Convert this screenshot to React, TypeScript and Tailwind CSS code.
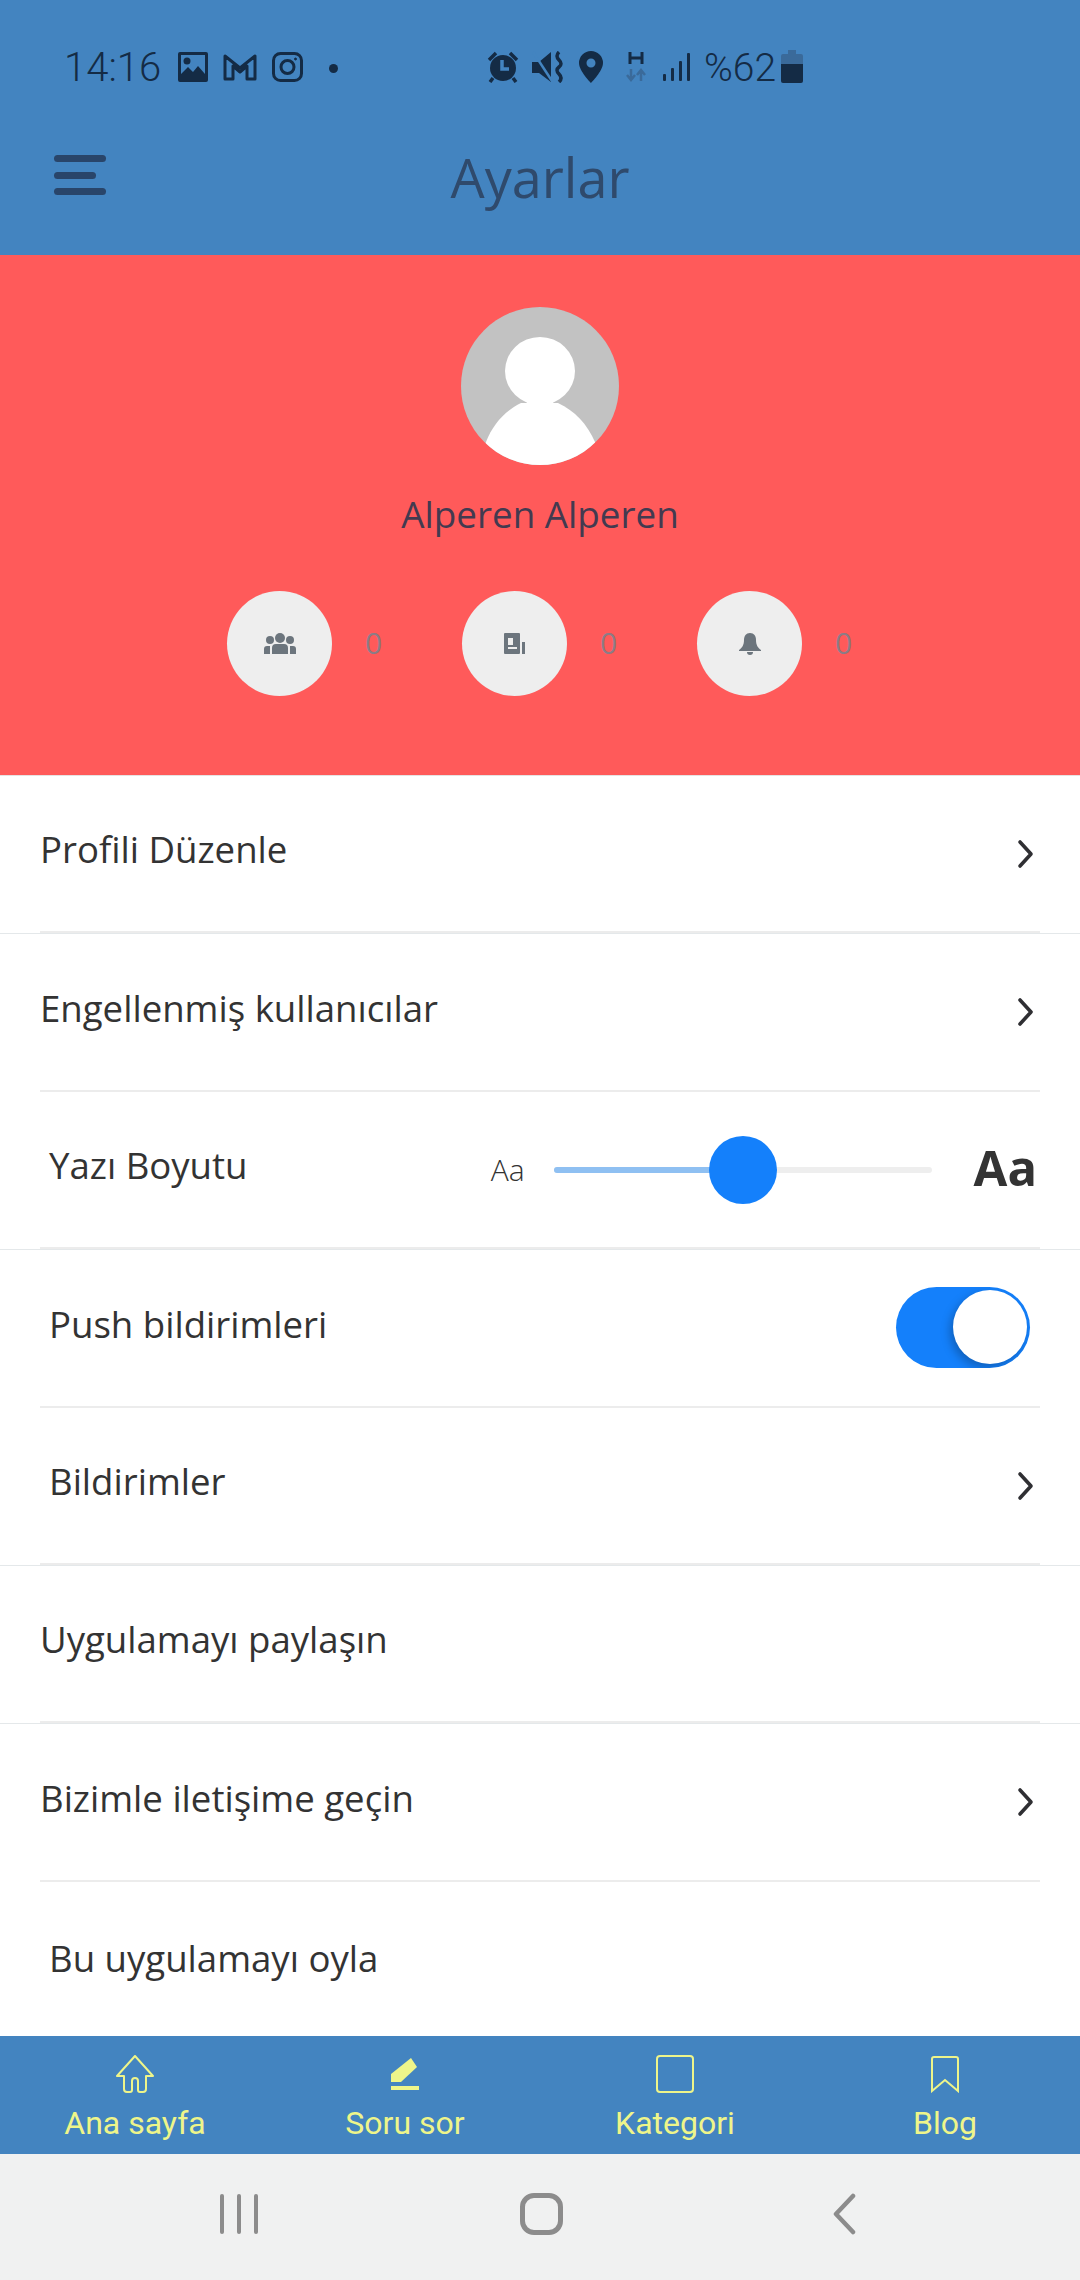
import type { ReactNode } from 'react'

const SANS = "font-['Open_Sans',sans-serif]"

function Chevron() {
  return (
    <svg width="18" height="30" viewBox="0 0 18 30" fill="none" stroke="#2f2f33" strokeWidth="3.600" strokeLinecap="round" strokeLinejoin="round">
      <path d="M4 3l11 12L4 27" />
    </svg>
  )
}

function StatusBar() {
  return (
    <div className="flex h-[97px] items-end pb-[9px] pl-[64px] text-[#142b45]">
      <span className="w-[114px] font-['Roboto',sans-serif] text-[40px] leading-[40px] font-light">14:16</span>
      <svg width="30" height="30" viewBox="0 0 30 30" className="mb-[6px]">
        <path fill="#142b45" fillRule="evenodd" d="M2 0h26a2 2 0 012 2v26a2 2 0 01-2 2H2a2 2 0 01-2-2V2a2 2 0 012-2zm1 3v19l7-7 5 5 5-6 7 8V3z" />
        <circle cx="9" cy="9" r="3.500" fill="#142b45" />
      </svg>
      <svg width="34" height="28" viewBox="0 0 34 28" fill="none" stroke="#142b45" strokeWidth="3" strokeLinejoin="round" className="mb-[7px] ml-[15px]">
        <path d="M2 26V3l15 12L32 3v23h-8V13l-7 6-7-6v13z" />
      </svg>
      <svg width="31" height="30" viewBox="0 0 31 30" fill="none" stroke="#142b45" strokeWidth="3" className="mb-[6px] ml-[15px]">
        <rect x="1.500" y="1.500" width="28" height="27" rx="7" />
        <circle cx="15.500" cy="15" r="6.500" />
        <circle cx="23.500" cy="7" r="1" fill="#142b45" strokeWidth="1" />
      </svg>
      <span className="mb-[15px] ml-[26px] size-[9px] rounded-full bg-[#142b45]" />
      <svg width="32" height="32" viewBox="0 0 32 32" className="mb-[5px] ml-[149px]">
        <circle cx="16" cy="17" r="13" fill="#142b45" />
        <path d="M15 9v9h7" fill="none" stroke="#4384c0" strokeWidth="3.500" />
        <path d="M2 9l7-7M30 9l-7-7M6 27l-3 4M26 27l3 4" stroke="#142b45" strokeWidth="3.500" />
      </svg>
      <svg width="32" height="32" viewBox="0 0 32 32" className="mb-[5px] ml-[13px]">
        <path fill="#142b45" d="M0 11h7L19 1v30L7 22H0z" />
        <path d="M1 1l19 29" stroke="#4384c0" strokeWidth="2.500" />
        <path d="M27 1q-4 4 0 8t0 7 0 7 0 8" fill="none" stroke="#142b45" strokeWidth="3.500" />
      </svg>
      <svg width="24" height="32" viewBox="0 0 24 32" className="mb-[5px] ml-[15px]">
        <path fill="#142b45" fillRule="evenodd" d="M12 0a12 12 0 0112 12c0 8-12 20-12 20S0 20 0 12A12 12 0 0112 0zm0 7.500a4.500 4.500 0 100 9 4.500 4.500 0 000-9z" />
      </svg>
      <svg width="22" height="32" viewBox="0 0 22 32" className="mb-[5px] ml-[22px]">
        <path d="M5 1v12M17 1v12M5 7h12" stroke="#142b45" strokeWidth="3" />
        <path d="M6 18v11M2 24l4 5 4-5M16 30V19M12 24l4-5 4 5" fill="none" stroke="#3a6a9a" strokeWidth="2.500" />
      </svg>
      <svg width="27" height="28" viewBox="0 0 27 28" className="mb-[7px] ml-[16px]" fill="#142b45">
        <rect x="0" y="21" width="3" height="7" rx="1" />
        <rect x="8" y="15" width="3" height="13" rx="1" />
        <rect x="16" y="8" width="3" height="20" rx="1" />
        <rect x="24" y="0" width="3" height="28" rx="1" />
      </svg>
      <span className="ml-[14px] font-['Roboto',sans-serif] text-[39px] leading-[40px] font-light">%62</span>
      <svg width="22" height="33" viewBox="0 0 22 33" className="mb-[5px] ml-[5px]">
        <path fill="#3a6a9a" d="M7 0h8v4h5a2 2 0 012 2v8H0V6a2 2 0 012-2h5z" />
        <path fill="#142b45" d="M0 14h22v17a2 2 0 01-2 2H2a2 2 0 01-2-2z" />
      </svg>
    </div>
  )
}

function Header() {
  return (
    <header className="h-[255px] shrink-0 bg-[#4384c0]">
      <StatusBar />
      <div className="relative flex h-[158px] items-center pb-[2px]">
        <div className="ml-[54px] flex h-[40px] w-[52px] flex-col justify-between">
          <span className="h-[7px] w-[52px] rounded-full bg-[#29456a]" />
          <span className="h-[7px] w-[42px] rounded-full bg-[#29456a]" />
          <span className="h-[7px] w-[52px] rounded-full bg-[#29456a]" />
        </div>
        <h1 className={`${SANS} absolute inset-x-0 top-[45px] text-center text-[54px] leading-[70px] font-normal text-[#2f4a6c]`}>
          Ayarlar
        </h1>
      </div>
    </header>
  )
}

function StatIcon({ children }: { children: ReactNode }) {
  return (
    <div className="flex items-center">
      <div className="flex size-[105px] items-center justify-center rounded-full bg-[#eeeeee]">{children}</div>
      <span className={`${SANS} mb-[2px] w-[130px] pl-[33px] text-[30px] font-normal text-[#8c7c86]`}>0</span>
    </div>
  )
}

function Profile() {
  return (
    <section className="flex h-[520px] shrink-0 flex-col items-center bg-[#ff5a5a] pt-[52px]">
      <div className="size-[158px] overflow-hidden rounded-full bg-[#c2c2c2]">
        <svg viewBox="0 0 158 158" className="size-full">
          <ellipse cx="79" cy="64" rx="35" ry="34" fill="#fff" />
          <path d="M66 88h26v10H66z" fill="#fff" />
          <path d="M18 158l7-23C32 117 44 104 60 96h37c17 8 29 21 37 39l7 23z" fill="#fff" />
        </svg>
      </div>
      <div className={`${SANS} mt-[24px] text-[36.800px] leading-[50px] text-[#433a50]`}>Alperen Alperen</div>
      <div className="mt-[52px] ml-[227px] flex self-start">
        <StatIcon>
          <svg width="32" height="21" viewBox="0 0 32 21" fill="#6c757d">
            <circle cx="16" cy="5" r="5" />
            <circle cx="6" cy="7" r="4" />
            <circle cx="26" cy="7" r="4" />
            <path d="M8 21v-6q0-4 4-4h8q4 0 4 4v6zM0 21v-5q0-3 3-3h3v8zM26 13h3q3 0 3 3v5h-6z" />
          </svg>
        </StatIcon>
        <StatIcon>
          <svg width="21" height="21" viewBox="0 0 21 21">
            <path fillRule="evenodd" fill="#6c757d" d="M1 0h14a1 1 0 011 1v19a1 1 0 01-1 1H1a1 1 0 01-1-1V1a1 1 0 011-1zm3 5v7h5V5zm0 9v2h9v-2z" />
            <rect x="18" y="9" width="3" height="12" fill="#6c757d" />
          </svg>
        </StatIcon>
        <StatIcon>
          <svg width="22" height="22" viewBox="0 0 22 22" fill="#6c757d">
            <path d="M11 0c4 0 6 3 6 7 0 5 2 8 5 10v1H0v-1c3-2 5-5 5-10 0-4 2-7 6-7z" />
            <path d="M8 19h6a3 3 0 01-6 0z" />
          </svg>
        </StatIcon>
      </div>
    </section>
  )
}

// full: the divider also runs faintly out to the screen edges
function Row({ label, indent, full, children }: { label: string; indent?: boolean; full?: boolean; children?: ReactNode }) {
  return (
    <div className={`h-[158px] shrink-0 ${full ? 'border-b border-[#e4e8ea]' : ''}`}>
      <div className={`mx-[40px] flex items-center justify-between border-b-2 border-[#ececec] ${full ? 'h-[157px]' : 'h-[158px]'}`}>
        <span className={`${SANS} mb-[8px] text-[36.600px] text-[#333333] ${indent ? 'pl-[9px]' : ''}`}>{label}</span>
        {children}
      </div>
    </div>
  )
}

function FontSizeSlider() {
  return (
    <div className="flex items-center">
      <span className={`${SANS} text-[30px] font-light text-[#333333]`}>Aa</span>
      <div className="relative ml-[29px] h-[6px] w-[378px] rounded-full bg-[#eeeeee]">
        <div className="h-full w-[189px] rounded-l-full bg-[#8fc0f2]" />
        <div className="absolute top-[-31px] left-[155px] size-[68px] rounded-full bg-[#1480fb]" />
      </div>
      <span className={`${SANS} mr-[3px] mb-[4px] ml-[42px] text-[49px] leading-none font-bold text-[#333333]`}>Aa</span>
    </div>
  )
}

function Toggle() {
  return (
    <div className="mr-[10px] mb-[2px] flex h-[81px] w-[134px] items-center justify-end overflow-hidden rounded-full bg-[#1480fb] pr-[3px]">
      <div className="size-[74px] rounded-full bg-white shadow-[-3px_4px_10px_rgba(0,0,0,0.25)]" />
    </div>
  )
}

function TabBar() {
  const stroke = '#eef58a'
  const tabs: { label: string; icon: ReactNode }[] = [
    {
      label: 'Ana sayfa',
      icon: (
        <svg width="38" height="38" viewBox="0 0 38 38" fill="none" stroke={stroke} strokeWidth="2">
          <path d="M19 1L1 21l7 0v13q0 3 3 3h3q2 0 2-2V26q0-3 3-3t3 3v9q0 2 2 2h3q3 0 3-3V21h7z" strokeLinejoin="round" />
        </svg>
      ),
    },
    {
      label: 'Soru sor',
      icon: (
        <svg width="30" height="38" viewBox="0 0 30 38" fill={stroke}>
          <path d="M21 3l6 9-16 15H1v-8z" />
          <rect x="1" y="31" width="28" height="4" />
        </svg>
      ),
    },
    {
      label: 'Kategori',
      icon: (
        <svg width="38" height="38" viewBox="0 0 38 38" fill="none" stroke={stroke} strokeWidth="2">
          <rect x="1" y="1" width="36" height="36" rx="3" />
        </svg>
      ),
    },
    {
      label: 'Blog',
      icon: (
        <svg width="30" height="38" viewBox="0 0 30 38" fill="none" stroke={stroke} strokeWidth="2">
          <path d="M2 36V4q0-2 2-2h22q2 0 2 2v32L15 25z" />
        </svg>
      ),
    },
  ]
  return (
    <nav className="grid h-[118px] shrink-0 grid-cols-4 bg-[#4384c0]">
      {tabs.map((t) => (
        <div key={t.label} className="flex flex-col items-center pt-[19px]">
          <div className="flex h-[38px] items-center">{t.icon}</div>
          <span className="mt-[10px] font-['Roboto',sans-serif] text-[32px] leading-[40px] text-[#eef58a]">{t.label}</span>
        </div>
      ))}
    </nav>
  )
}

function SystemNav() {
  return (
    <div className="flex h-[126px] shrink-0 items-center bg-[#f0f1f1] pb-[6px] pl-[220px]">
      <div className="flex w-[300px] justify-start gap-[13px]">
        <span className="h-[40px] w-[4px] rounded-full bg-[#8c8c8c]" />
        <span className="h-[40px] w-[4px] rounded-full bg-[#8c8c8c]" />
        <span className="h-[40px] w-[4px] rounded-full bg-[#8c8c8c]" />
      </div>
      <div className="h-[42px] w-[43px] rounded-[14px] border-[5px] border-[#8c8c8c]" />
      <svg width="24" height="42" viewBox="0 0 24 42" fill="none" stroke="#8c8c8c" strokeWidth="4.500" strokeLinecap="round" strokeLinejoin="round" className="ml-[269px]">
        <path d="M21 3L4 21l17 18" />
      </svg>
    </div>
  )
}

export default function App() {
  return (
    <div className="flex h-[2280px] w-[1080px] flex-col overflow-hidden bg-white">
      <Header />
      <Profile />
      <main className="flex min-h-0 flex-1 flex-col border-t border-[#e6e2e2]">
        <Row label="Profili Düzenle" full>
          <span className="mr-[6px] flex"><Chevron /></span>
        </Row>
        <Row label="Engellenmiş kullanıcılar">
          <span className="mr-[6px] flex"><Chevron /></span>
        </Row>
        <Row label="Yazı Boyutu" indent full>
          <FontSizeSlider />
        </Row>
        <Row label="Push bildirimleri" indent>
          <Toggle />
        </Row>
        <Row label="Bildirimler" indent full>
          <span className="mr-[6px] flex"><Chevron /></span>
        </Row>
        <Row label="Uygulamayı paylaşın" full />
        <Row label="Bizimle iletişime geçin">
          <span className="mr-[6px] flex"><Chevron /></span>
        </Row>
        <div className="mx-[40px] flex flex-1 items-center">
          <span className={`${SANS} mb-[2px] pl-[9px] text-[36.600px] text-[#333333]`}>Bu uygulamayı oyla</span>
        </div>
      </main>
      <TabBar />
      <SystemNav />
    </div>
  )
}
